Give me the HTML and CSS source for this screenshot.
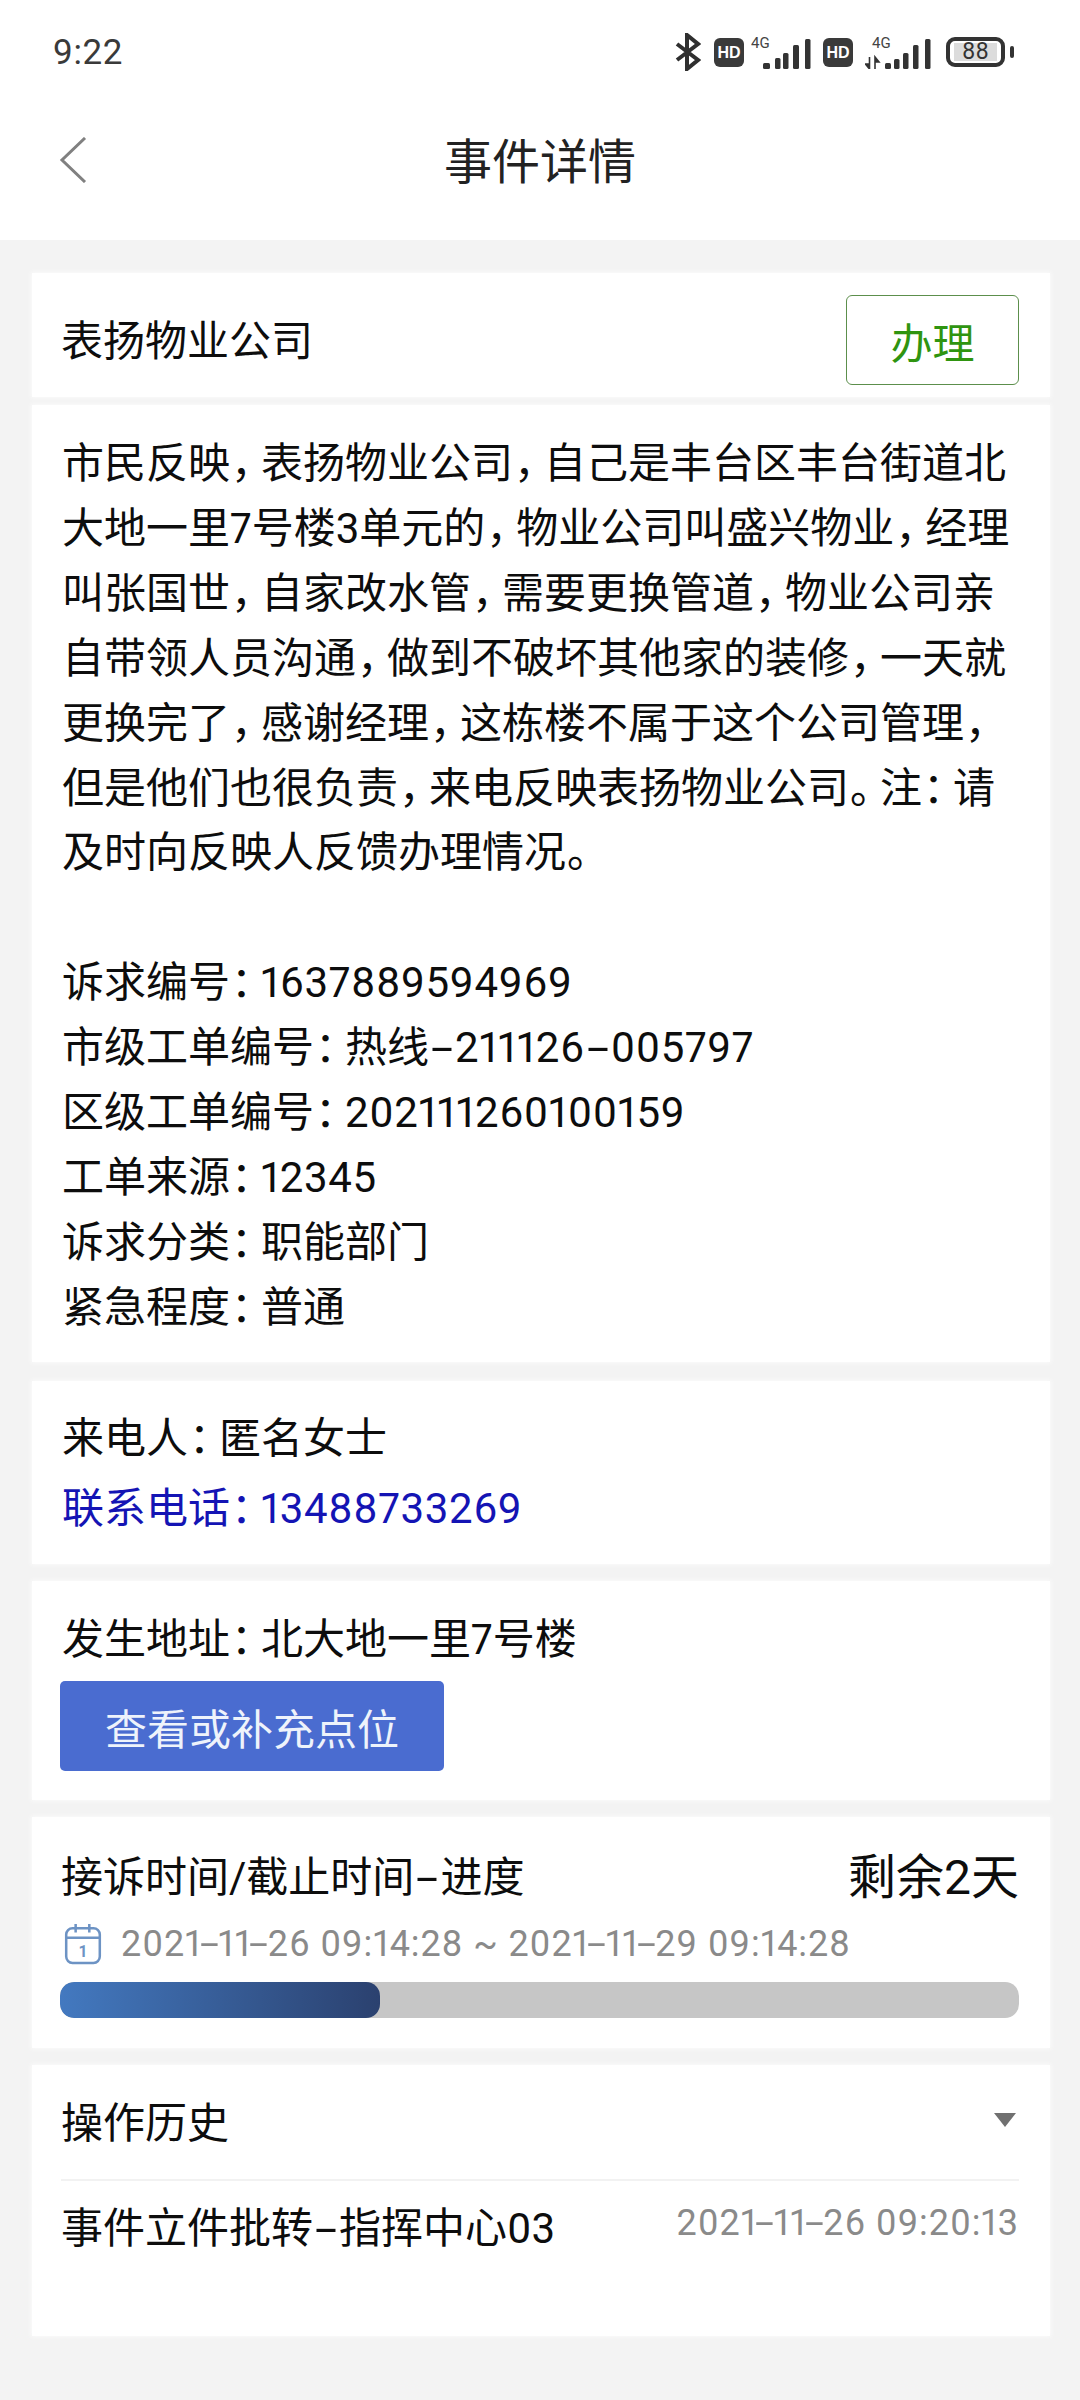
FILE: index.html
```html
<!DOCTYPE html>
<html lang="zh-CN">
<head>
<meta charset="utf-8">
<title>事件详情</title>
<link rel="stylesheet" href="styles.css">
</head>
<body>
<header class="top">
  <div class="status">
    <span class="clock">9:22</span>
    <div class="status-icons">
      <svg class="ic-bt" viewBox="0 0 26 38"><path d="M2 11 L23 27 L12 36 V2 L23 11 L2 27" fill="none" stroke="#2f2f2f" stroke-width="4"/></svg>
      <svg class="ic-hd" viewBox="0 0 30 29"><rect width="30" height="29" rx="6" fill="#3a3a3a"/><text x="15" y="20" text-anchor="middle" class="hd-text">HD</text></svg>
      <svg class="ic-net" viewBox="0 -6 61 39"><text x="0" y="12" class="g-text">4G</text><rect x="12" y="27" width="7" height="6" rx="1.5"/><rect x="24" y="22" width="5.5" height="11" rx="1.5"/><rect x="32" y="17" width="5.5" height="16" rx="1.5"/><rect x="42" y="9" width="6" height="24" rx="1.5"/><rect x="54" y="3" width="5.5" height="30" rx="1.5"/></svg>
      <svg class="ic-hd ic-hd2" viewBox="0 0 30 29"><rect width="30" height="29" rx="6" fill="#3a3a3a"/><text x="15" y="20" text-anchor="middle" class="hd-text">HD</text></svg>
      <svg class="ic-net2" viewBox="0 -6 68 39"><text x="7" y="12" class="g-text">4G</text><path d="M4.500 21V33L0.500 28H4.500M10 33V21L14 26H10" fill="#333" stroke="#333" stroke-width="1.600"/><rect x="20" y="27" width="6" height="6" rx="1.500"/><rect x="29" y="23" width="5.500" height="10" rx="1.500"/><rect x="38" y="17" width="5.500" height="16" rx="1.500"/><rect x="48" y="9" width="5.500" height="24" rx="1.500"/><rect x="60" y="3" width="5.500" height="30" rx="1.500"/></svg>
      <div class="battery"><span class="battery-level">88</span></div>
      <span class="battery-tip"></span>
    </div>
  </div>
  <div class="nav">
    <svg class="back" viewBox="0 0 28 46"><path d="M26 1 L3 23 L26 45" fill="none" stroke="#808080" stroke-width="3"/></svg>
    <h1 class="nav-title">事件详情</h1>
  </div>
</header>

<main class="content">
  <div class="group">
    <section class="card card-head">
      <span class="txt">表扬物业公司</span>
      <button class="btn-handle">办理</button>
    </section>
    <section class="card card-body">
      <p class="para">市民反映<span class="p">，</span>表扬物业公司<span class="p">，</span>自己是丰台区丰台街道北<br>大地一里7号楼3单元的<span class="p">，</span>物业公司叫盛兴物业<span class="p">，</span>经理<br>叫张国世<span class="p">，</span>自家改水管<span class="p">，</span>需要更换管道<span class="p">，</span>物业公司亲<br>自带领人员沟通<span class="p">，</span>做到不破坏其他家的装修<span class="p">，</span>一天就<br>更换完了<span class="p">，</span>感谢经理<span class="p">，</span>这栋楼不属于这个公司管理<span class="p">，</span><br>但是他们也很负责<span class="p">，</span>来电反映表扬物业公司<span class="p">。</span>注<span class="p">：</span>请<br>及时向反映人反馈办理情况<span class="p">。</span></p>
      <p class="para para-meta">诉求编号<span class="p">：</span><span class="num">1637889594969</span><br>市级工单编号<span class="p">：</span>热线<span class="dash dash-wide">-</span><span class="num">211126</span><span class="dash dash-wide">-</span><span class="num">005797</span><br>区级工单编号<span class="p">：</span><span class="num">202111260100159</span><br>工单来源<span class="p">：</span><span class="num">12345</span><br>诉求分类<span class="p">：</span>职能部门<br>紧急程度<span class="p">：</span>普通</p>
    </section>
  </div>

  <section class="card card-caller">
    <div class="caller-line">来电人<span class="p">：</span>匿名女士</div>
    <div class="caller-line phone">联系电话<span class="p">：</span><span class="num">13488733269</span></div>
  </section>

  <section class="card card-addr">
    <div class="addr-line">发生地址<span class="p">：</span>北大地一里7号楼</div>
    <button class="btn-point">查看或补充点位</button>
  </section>

  <section class="card card-time">
    <div class="time-head">
      <span class="txt">接诉时间/截止时间<span class="dash dash-wide">-</span>进度</span>
      <span class="remain">剩余2天</span>
    </div>
    <div class="date-row">
      <svg class="cal" viewBox="0 0 36 40"><rect x="2" y="5" width="32" height="33" rx="6" fill="#fff" stroke="#6d93c4" stroke-width="2.4"/><path d="M2 14H34M11 1V9M24 1V9" fill="none" stroke="#6d93c4" stroke-width="2.4"/><text x="18" y="32" text-anchor="middle" class="cal-num">1</text></svg>
      <span class="dates">2021<span class="dash">-</span>11<span class="dash">-</span>26 09:14:28 ~ 2021<span class="dash">-</span>11<span class="dash">-</span>29 09:14:28</span>
    </div>
    <div class="track"><div class="fill"></div></div>
  </section>

  <section class="card card-history">
    <div class="hist-head">
      <span class="txt">操作历史</span>
      <span class="tri"></span>
    </div>
    <div class="hist-item">
      <span class="txt">事件立件批转<span class="dash dash-wide">-</span>指挥中心03</span>
      <span class="hist-time">2021<span class="dash">-</span>11<span class="dash">-</span>26 09:20:13</span>
    </div>
  </section>
</main>
</body>
</html>
```
FILE: styles.css
```css
* { box-sizing: border-box; }
html, body { margin: 0; padding: 0; }
body {
  width: 1080px;
  height: 2400px;
  background: #f3f3f3;
  overflow: hidden;
  color: #0d0d0d;
  font-family: Roboto, "Noto Sans CJK SC", sans-serif;
  font-variant-numeric: proportional-nums;
}
.top { height: 240px; background: #fff; }
.status {
  height: 104px;
  padding: 0 66px 0 53px;
  display: flex;
  justify-content: space-between;
  align-items: center;
}
.clock { font-size: 35px; color: #3a3a3a; letter-spacing: 0.5px; }
.status-icons { display: flex; align-items: center; }
.ic-bt { width: 26px; height: 38px; margin-right: 13px; }
.ic-hd { width: 30px; height: 29px; margin-right: 7px; }
.ic-hd2 { margin-left: 11px; margin-right: 12px; }
.ic-net { width: 61px; height: 39px; margin-bottom: 6px; fill: #333; }
.ic-net2 { width: 68px; height: 39px; margin-bottom: 6px; margin-right: 13px; fill: #333; }
.hd-text { font: 700 16px "Liberation Sans", sans-serif; fill: #fff; }
.g-text { font: 400 15px Roboto, sans-serif; fill: #444; }
.cal-num { font: 700 15px Roboto, sans-serif; fill: #6d93c4; }
.battery {
  width: 59px;
  height: 30px;
  border: 4px solid #333;
  border-radius: 9px;
  padding: 2px 4px;
  display: flex;
}
.battery-level {
  flex: 1;
  background: #dcdcdc;
  font-size: 23px;
  line-height: 18px;
  text-align: center;
  color: #333;
}
.battery-tip { width: 4px; height: 12px; margin-left: 5px; background: #333; border-radius: 2px; }
.nav { position: relative; height: 116px; display: flex; align-items: center; justify-content: center; }
.back { position: absolute; left: 59px; top: 33px; width: 28px; height: 46px; }
.nav-title {
  margin: 0;
  font-size: 48px;
  font-weight: 400;
  line-height: 60px;
  color: #222;
  position: relative;
  top: 1px;
}

.content {
  padding: 33px 30px 0 32px;
  display: flex;
  flex-direction: column;
  gap: 17px;
}
.group { display: flex; flex-direction: column; gap: 8px; }
.card { background: #fff; box-shadow: 0 0 5px 1px rgba(255,255,255,.7); }
.txt { font-size: 42px; line-height: 65px; }
.p { margin-left: 1px; letter-spacing: -12px; }
.num { letter-spacing: .6px; }
.dash { display: inline-block; width: .46em; text-align: center; transform: scaleX(1.9); }
.dash-wide { width: .62em; }

.card-head {
  height: 124px;
  padding: 22px 31px 0 29px;
  display: flex;
  justify-content: space-between;
  align-items: flex-start;
}
.card-head .txt { margin-top: 14px; }
.btn-handle {
  width: 173px;
  height: 90px;
  background: #fff;
  border: 1.5px solid #5c8f4c;
  border-radius: 6px;
  color: #2f9410;
  font: 400 42px Roboto, "Noto Sans CJK SC", sans-serif;
  padding: 0;
}

.card-body { height: 957px; padding: 27px 20px 0 30px; }
.para { margin: 0; font-size: 42px; line-height: 64.9px; white-space: nowrap; }
.para-meta { margin-top: 64.9px; }

.card-caller { height: 183px; padding: 23px 30px 0 30px; margin-top: 2px; }
.caller-line { font-size: 42px; line-height: 70px; }
.phone { color: #1414b4; }

.card-addr { height: 219px; padding: 26px 30px 0 30px; }
.addr-line { font-size: 42px; line-height: 65px; }
.btn-point {
  display: block;
  width: 384px;
  height: 90px;
  margin: 9px 0 0 -2px;
  background: #4a6cd0;
  border: 0;
  border-radius: 5px;
  color: #eef3fb;
  font: 400 42px Roboto, "Noto Sans CJK SC", sans-serif;
  padding: 0;
}

.card-time { height: 231px; padding: 28px 31px 0 29px; }
.time-head { display: flex; justify-content: space-between; align-items: center; height: 65px; }
.remain { font-size: 48px; line-height: 65px; }
.date-row { display: flex; align-items: center; height: 50px; margin-top: 9px; }
.cal { width: 38px; height: 42px; margin: 0 19px 0 3px; flex: none; }
.dates { font-size: 36px; line-height: 50px; color: #8a8a8a; white-space: nowrap; letter-spacing: .9px; }
.track { height: 36px; margin: 13px 0 0 -1px; background: #c6c6c6; border-radius: 14px; overflow: hidden; }
.fill {
  width: 320px;
  height: 100%;
  border-radius: 14px;
  background: linear-gradient(90deg, #4379c0, #2b416f);
}

.card-history { height: 271px; padding: 0 31px 0 29px; }
.hist-head {
  height: 116px;
  display: flex;
  justify-content: space-between;
  align-items: center;
  border-bottom: 2px solid #f2f2f2;
}
.hist-head .txt { position: relative; top: 1px; }
.tri {
  width: 0;
  height: 0;
  border-left: 11px solid transparent;
  border-right: 11px solid transparent;
  border-top: 14px solid #707070;
  margin: 0 3px 0 0;
  position: relative;
  top: -2px;
}
.hist-item { display: flex; justify-content: space-between; align-items: flex-start; padding-top: 15px; }
.hist-time { font-size: 36px; line-height: 55px; color: #8a8a8a; white-space: nowrap; letter-spacing: .9px; }
```
